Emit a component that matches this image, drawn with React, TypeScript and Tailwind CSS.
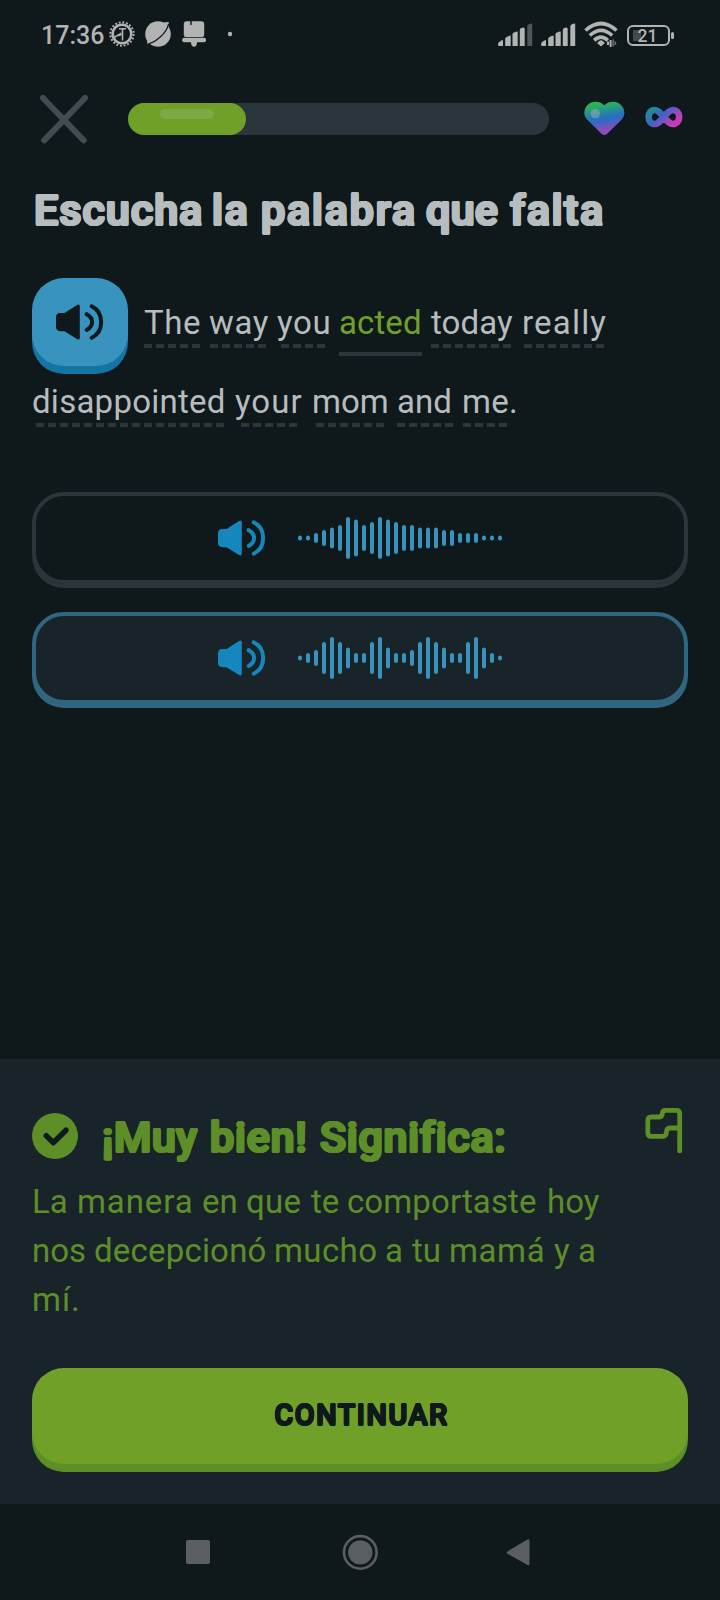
import React from "react";

const WAVE_A = [5, 5, 10, 16, 21, 26, 42, 37, 26, 32, 42, 37, 32, 26, 26, 21, 21, 21, 16, 16, 10, 10, 10, 5, 5, 5];
const WAVE_B = [5, 10, 16, 32, 42, 32, 21, 10, 10, 32, 42, 21, 10, 10, 16, 32, 42, 32, 21, 10, 10, 32, 42, 21, 10, 5];

// A ring of hard shadows thickens the glyphs and rounds their corners.
const ROUNDED_HEADING =
  "text-[43px] font-medium leading-[48px] whitespace-nowrap [text-shadow:1.4px_0,-1.4px_0,0_1.4px,0_-1.4px,1px_1px,-1px_1px,1px_-1px,-1px_-1px]";

function Speaker({ className }: { className: string }) {
  return (
    <svg viewBox="0 0 48 36" className={`h-9 w-12 shrink-0 ${className}`} fill="none">
      <path d="M4 9H8.5L21 1Q23.8 -0.4 23.8 2.4V33.6Q23.8 36.4 21 35L8.5 27.2H4.5Q0 27 0 22.5V13.5Q0 9 4 9Z" fill="currentColor" />
      <path d="M30.7 10.2C37.9 14 37.9 22 30.7 25.9M35.7 2.3C48.3 8.4 48.3 27.6 35.7 33.7" stroke="currentColor" strokeWidth="4" strokeLinecap="round" />
    </svg>
  );
}

function Wave({ bars }: { bars: number[] }) {
  return (
    <svg viewBox="0 0 204 44" className="h-11 w-[204px] shrink-0">
      {bars.map((h, i) => (
        <rect key={i} x={i * 8} y={22 - h / 2} width="4" height={h} rx="2" fill="#3893be" />
      ))}
    </svg>
  );
}

function Option({ bars, selected }: { bars: number[]; selected?: boolean }) {
  const tone = selected
    ? "border-[#306680] bg-[#182429] shadow-[0_4px_0_#306680]"
    : "border-[#2a363c] shadow-[0_4px_0_#2a363c]";
  return (
    <button className={`mb-1 flex h-[92px] w-full items-center rounded-[32px] border-4 pl-[182px] ${tone}`}>
      <Speaker className="text-[#1587bc]" />
      <span className="w-8" />
      <Wave bars={bars} />
    </button>
  );
}

function Word({ text, slot, dash }: { text: string; slot: string; dash?: string }) {
  return (
    <span className={`flex shrink-0 flex-col whitespace-nowrap ${slot}`}>
      <span className="h-10 leading-10">{text}</span>
      {dash && (
        <span className={`mt-[1px] h-1 bg-[repeating-linear-gradient(90deg,#2a363c_0_8px,transparent_8px_12px)] ${dash}`} />
      )}
    </span>
  );
}

function Signal({ weak }: { weak?: boolean }) {
  return (
    <svg viewBox="0 0 35 24" className="h-6 w-[35px]" fill="#b3b3b3">
      <path d="M0 21.5Q0 18.5 5 17V23H1.5Q0 23 0 21.5ZM7.2 15.5Q8 13.5 12.7 12.5V23H7.2ZM14.5 11Q15 9 19.7 8.5V23H14.5ZM21.8 7Q22 4.5 25.5 4.5Q26.7 4.5 26.7 6V23H21.8Z" />
      <path d="M29.3 3Q30 .5 34.2 .5V23H29.3Z" opacity={weak ? 0.4 : 1} />
    </svg>
  );
}

export default function App() {
  return (
    <div className="flex h-[1600px] w-[720px] flex-col overflow-hidden bg-[#0f181b] font-[Roboto,'Liberation_Sans',sans-serif] text-[#b7bcbf]">
      <div className="flex h-[68px] shrink-0 items-center pl-[41px] text-[#b3b3b3]">
        <span className="w-[68px] pt-[3px] text-[25px] leading-8 font-medium whitespace-nowrap">17:36</span>
        <svg viewBox="0 0 126 28" className="h-7 w-[126px]" fill="none">
          <circle cx="13" cy="14" r="9.3" stroke="#b3b3b3" strokeWidth="2.6" />
          <circle cx="13" cy="14" r="11.7" stroke="#b3b3b3" strokeWidth="2" strokeDasharray="1.9 1.776" />
          <path d="M10 8.8H17M13.5 9V20.5" stroke="#b3b3b3" strokeWidth="1.6" />
          <path d="M3.5 17.5L12.5 12.2V15.5L8 16.5L4.5 19Z" fill="#b3b3b3" />
          <circle cx="49" cy="14" r="12.8" fill="#b3b3b3" />
          <path d="M38.4 20L38 23.6L41.5 23.5Z M54 2.5L59.8 2L59.4 7Z" fill="#b3b3b3" />
          <path d="M59.6 3.8Q58 11 51.2 17T40 23.6" stroke="#0f181b" strokeWidth="1.2" />
          <path d="M74.8 15V4Q74.8 1.2 77.8 1.2H92.2Q95.2 1.2 95.2 4V15Q95.2 17 93 17H77Q74.8 17 74.8 15Z" fill="#b3b3b3" />
          <path d="M82 1V5" stroke="#0f181b" strokeWidth="1.4" />
          <rect x="73.2" y="17.8" width="23.8" height="4.4" rx="2" fill="#b3b3b3" />
          <path d="M82 22H88Q88 26.8 85 26.8T82 22Z" fill="#b3b3b3" />
          <circle cx="121" cy="14" r="2.2" fill="#b3b3b3" />
        </svg>
        <div className="ml-auto flex items-center pt-[2px] pr-[46px]">
          <Signal weak />
          <span className="w-2" />
          <Signal />
          <svg viewBox="0 0 34 28" className="ml-2 h-7 w-[34px]" fill="none" stroke="#b3b3b3" strokeWidth="3.6">
            <path d="M1.5 9.5Q17 -4.5 32.5 9.5" />
            <path d="M5.8 14.5Q17 4.2 28.2 14.5" />
            <path d="M10.2 19.4Q17 13 23.8 19.4" />
            <path d="M17 25L13.6 22Q17 17.6 20.4 22Z" fill="#b3b3b3" stroke="#b3b3b3" strokeWidth="1" />
            <path d="M24 20.5V24M26.6 19V26" strokeWidth="2" />
            <path d="M29.2 18.5V25.5M31.3 20.5V24" strokeWidth="1.8" opacity=".5" />
          </svg>
          <div className="ml-[9px] flex items-center">
            <div className="relative h-[21px] w-[43px] rounded-[6px] border-2 border-[#b3b3b3] text-center text-[17.5px] leading-[18px] font-medium">
              <span className="absolute top-[3px] left-[4px] h-[11px] w-[8px] bg-[#44494b]" />
              <span className="relative left-[-1px]">21</span>
            </div>
            <span className="ml-[1px] h-[7px] w-[3px] rounded-full bg-[#b3b3b3]" />
          </div>
        </div>
      </div>

      <div className="flex h-[102px] shrink-0 items-center pl-10">
        <svg viewBox="0 0 48 48" className="h-12 w-12 shrink-0 overflow-visible" stroke="#3f4d53" strokeWidth="6" strokeLinecap="round">
          <path d="M3 3L43.7 45.3M45 3L4.2 45.3" />
        </svg>
        <div className="ml-10 h-8 w-[421px] rounded-full bg-[#2a363c]">
          <div className="h-8 w-[118px] rounded-full bg-[#70a027] pt-1.5 pl-8">
            <div className="h-2.5 w-[54px] rounded-full bg-[#7fa944]" />
          </div>
        </div>
        <svg viewBox="0 0 42 36" className="ml-[35px] h-9 w-[42px]">
          <defs>
            <linearGradient id="heart" x1=".3" y1="0" x2=".5" y2="1">
              <stop offset=".05" stopColor="#2cb84f" />
              <stop offset=".5" stopColor="#2570c2" />
              <stop offset=".62" stopColor="#3c66c4" />
              <stop offset=".9" stopColor="#9a48bd" />
            </linearGradient>
          </defs>
          <path d="M20.3 4.3C24.5 -.2 31.5-.1 35.3 2.5C41.5 7 41.7 14.5 37.5 18.8L22.9 33Q20.3 35.2 17.7 33L3.3 18.8C-1 14.5-1 7 5.3 2.5C9.1-.1 16.1-.2 20.3 4.3Z" fill="url(#heart)" />
          <circle cx="11.3" cy="12.6" r="4.7" fill="#b7bcbf" fillOpacity=".4" />
        </svg>
        <svg viewBox="0 0 38 22" className="mt-[-4px] ml-[19px] h-[22px] w-[38px]">
          <defs>
            <linearGradient id="inf" x1="0" y1=".2" x2="1" y2=".7">
              <stop offset="0" stopColor="#26869b" />
              <stop offset=".4" stopColor="#4260c6" />
              <stop offset=".65" stopColor="#7e52c2" />
              <stop offset=".95" stopColor="#c83bb4" />
            </linearGradient>
          </defs>
          <path d="M18.8 11C15 6.5 12.8 4 9.8 4C6 4 3.6 7 3.6 11S6 18 9.8 18C12.8 18 15 15.5 18.8 11C22.6 6.5 24.8 4 27.8 4C31.6 4 34.2 7 34.2 11S31.6 18 27.8 18C24.8 18 22.6 15.5 18.8 11Z" fill="none" stroke="url(#inf)" strokeWidth="6.6" />
        </svg>
      </div>

      <main className="flex h-[889px] shrink-0 flex-col px-8 pt-4">
        <h1 className={`flex h-12 pl-[2px] ${ROUNDED_HEADING}`}>
          <span className="w-[178px] shrink-0 tracking-[1px]">Escucha</span>
          <span className="w-[49px] shrink-0 tracking-[1.6px]">la</span>
          <span className="w-[165px] shrink-0 tracking-[1.8px]">palabra</span>
          <span className="w-[84px] shrink-0 tracking-[0.3px]">que</span>
          <span className="shrink-0 tracking-[1.6px]">falta</span>
        </h1>

        <div className="mt-11 flex h-24 text-[33px]">
          <button className="flex h-[88px] w-24 shrink-0 items-center rounded-[32px] bg-[#3893be] pl-6 text-[#0f181b] shadow-[0_8px_0_#1275a4]">
            <Speaker className="" />
          </button>
          <div className="flex pt-[25px] pl-4">
            <Word text="The" slot="w-[65px] tracking-[0.6px]" dash="w-14" />
            <Word text="way" slot="w-[68px] tracking-[0.6px]" dash="ml-[1px] w-14" />
            <Word text="you" slot="w-[62px] tracking-[0.7px]" dash="ml-1 w-11" />
            <span className="flex w-[83px] shrink-0 flex-col text-[#70a027]">
              <span className="h-10 leading-10 tracking-[0.1px]">acted</span>
              <span className="mt-[9px] h-1 bg-[#2a363c]" />
            </span>
            <span className="w-[9px]" />
            <Word text="today" slot="w-[91px] tracking-[0.1px]" dash="w-20" />
            <Word text="really" slot="tracking-[1.2px]" dash="ml-[2px] w-20" />
          </div>
        </div>
        <div className="mt-2 flex h-[46px] text-[33px]">
          <Word text="disappointed" slot="w-[203px] tracking-[0.25px]" dash="ml-1 w-[188px]" />
          <Word text="your" slot="w-[77px] tracking-[1px]" dash="ml-[6px] w-14" />
          <Word text="mom" slot="w-[85px]" dash="ml-1 w-[68px]" />
          <Word text="and" slot="w-[65px] tracking-[0.1px]" dash="w-14" />
          <Word text="me." slot="tracking-[0.3px]" dash="ml-[1px] w-11" />
        </div>

        <div className="mt-16 flex flex-col gap-6">
          <Option bars={WAVE_A} />
          <Option bars={WAVE_B} selected />
        </div>
      </main>

      <section className="flex h-[445px] shrink-0 flex-col bg-[#182429] px-8 text-[#5d8e27]">
        <div className="flex h-[118px] pt-12">
          <svg viewBox="0 0 46 46" className="mt-[6px] h-[46px] w-[46px] shrink-0">
            <circle cx="23" cy="23" r="23" fill="#5d8e27" />
            <path d="M14.2 22.7L21.2 29.7L34 17.2" fill="none" stroke="#0f181b" strokeWidth="5.4" strokeLinecap="round" strokeLinejoin="round" />
          </svg>
          <h2 className={`ml-6 flex h-12 pt-[6px] ${ROUNDED_HEADING}`}>
            <span className="w-[108px] shrink-0 tracking-[0.4px]">¡Muy</span>
            <span className="w-[110px] shrink-0 tracking-[0.8px]">bien!</span>
            <span className="shrink-0 tracking-[0.7px]">Significa:</span>
          </h2>
          <svg viewBox="-3 0 40 48" className="ml-auto h-12 w-10 shrink-0 overflow-visible" fill="none" stroke="#5d8e27" strokeWidth="4.8" strokeLinecap="round" strokeLinejoin="round">
            <path d="M28.7 43.9V6.8Q28.7 3.4 25.3 3.4H14.5Q11.4 3.4 11.3 6.3Q11.2 10 7.5 10H.5Q-3.2 10-3.2 13.7V25.5Q-3.2 29.4 .5 29.4H11Q15.3 29.4 15.4 25.2Q15.5 21 19 21H28.7" />
          </svg>
        </div>
        <p className="flex flex-col text-[33px] leading-[49px] whitespace-nowrap">
          <span className="flex">
            <span className="w-[45px]">La</span>
            <span className="w-[125px] tracking-[0.9px]">manera</span>
            <span className="w-11">en</span>
            <span className="w-[65px] tracking-[0.3px]">que</span>
            <span className="w-9">te</span>
            <span className="w-[200px] tracking-[0.1px]">comportaste</span>
            <span>hoy</span>
          </span>
          <span className="flex">
            <span className="w-[62px]">nos</span>
            <span className="w-[180px] tracking-[0.2px]">decepcionó</span>
            <span className="w-[111px] tracking-[0.4px]">mucho</span>
            <span className="w-[27px]">a</span>
            <span className="w-[37px]">tu</span>
            <span className="w-[105px] tracking-[0.6px]">mamá</span>
            <span className="w-[24px]">y</span>
            <span>a</span>
          </span>
          <span className="tracking-[1px]">mí.</span>
        </p>
        <button className="mt-11 flex h-24 shrink-0 items-center justify-center rounded-[32px] bg-[#70a027] pl-[3px] text-[29px] font-medium tracking-[1.4px] text-[#0f181b] shadow-[0_8px_0_#5d8e27] [text-shadow:.9px_0,-.9px_0,0_.9px,0_-.9px,.6px_.6px,-.6px_.6px,.6px_-.6px,-.6px_-.6px]">
          CONTINUAR
        </button>
      </section>

      <nav className="flex h-24 shrink-0 items-center">
        <span className="ml-[186px] h-6 w-6 rounded-[2px] bg-[#5b5e61]" />
        <svg viewBox="0 0 36 36" className="ml-[132px] h-9 w-9">
          <circle cx="18.3" cy="18.4" r="16.3" fill="none" stroke="#5b5e61" strokeWidth="2.6" />
          <circle cx="18.3" cy="18.4" r="12.2" fill="#5b5e61" />
        </svg>
        <svg viewBox="0 0 24 28" className="ml-[128px] h-7 w-6" fill="#5b5e61">
          <path d="M1.5 13.4L21 1.7Q23.5 .5 23.5 2.8V25.7Q23.5 28 21 26.8L1.5 15.8Q-.1 14.6 1.5 13.4Z" />
        </svg>
      </nav>
    </div>
  );
}
